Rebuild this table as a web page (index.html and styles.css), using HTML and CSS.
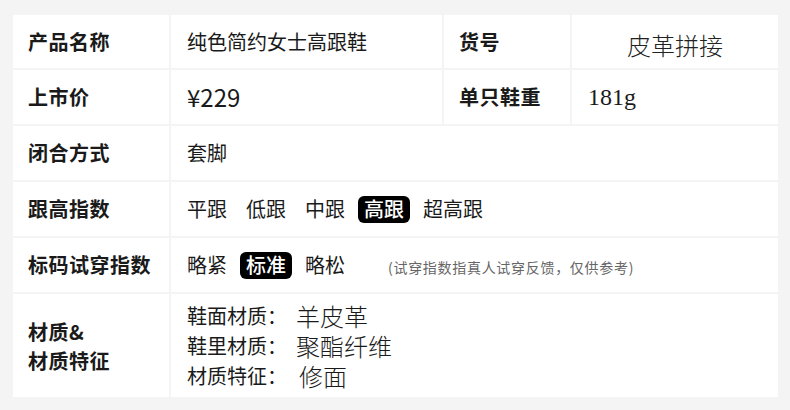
FILE: index.html
```html
<!DOCTYPE html>
<html lang="zh-CN">
<head>
<meta charset="UTF-8">
<meta name="viewport" content="width=device-width, initial-scale=1.0">
<title>产品参数</title>
<link rel="stylesheet" href="styles.css">
</head>
<body>

<div class="spec">
    <div class="cell label">产品名称</div>
    <div class="cell">纯色简约女士高跟鞋</div>
    <div class="cell label">货号</div>
    <div class="cell big light center">皮革拼接</div>

    <div class="cell label">上市价</div>
    <div class="cell big">¥229</div>
    <div class="cell label">单只鞋重</div>
    <div class="cell big serif">181g</div>

    <div class="cell label">闭合方式</div>
    <div class="cell wide">套脚</div>

    <div class="cell label">跟高指数</div>
    <div class="cell wide">
        <div class="options">
            <span class="opt">平跟</span>
            <span class="opt">低跟</span>
            <span class="opt">中跟</span>
            <span class="opt on">高跟</span>
            <span class="opt">超高跟</span>
        </div>
    </div>

    <div class="cell label">标码试穿指数</div>
    <div class="cell wide">
        <div class="options">
            <span class="opt">略紧</span>
            <span class="opt on">标准</span>
            <span class="opt">略松</span>
            <span class="note">(试穿指数指真人试穿反馈，仅供参考)</span>
        </div>
    </div>

    <div class="cell label lines">材质&amp;<br>材质特征</div>
    <div class="cell wide">
        <div class="material">
            <div class="mrow">鞋面材质：<span class="mval">羊皮革</span></div>
            <div class="mrow">鞋里材质：<span class="mval">聚酯纤维</span></div>
            <div class="mrow">材质特征：<span class="mval extra">修面</span></div>
        </div>
    </div>
</div>

</body>
</html>
```

FILE: styles.css
```css
body {
    margin: 0;
    padding: 15px 0 0 13px;
    background-color: #f4f4f4;
    font-family: "Noto Sans CJK SC", "Noto Sans", sans-serif;
    color: #1a1a1a;
}
.spec {
    display: grid;
    grid-template-columns: 156px 271px 126px 206px;
    grid-template-rows: 53px 54px 54px 54px 54px 103px;
    gap: 2px;
}
.cell {
    display: flex;
    align-items: center;
    padding-left: 16px;
    background-color: #fff;
    font-size: 20px;
    line-height: 1;
}
.label {
    padding-left: 15px;
    font-weight: bold;
    letter-spacing: 0.5px;
}
.lines {
    line-height: 29px;
}
.wide {
    grid-column: span 3;
}
.big {
    font-size: 24px;
}
.light {
    font-weight: 300;
    color: #222;
}
.center {
    justify-content: center;
    padding-left: 0;
    padding-top: 6px;
}
.serif {
    font-family: "Liberation Serif", serif;
}
.options {
    display: flex;
    align-items: baseline;
    gap: 7px;
    margin-left: -6px;
}
.opt {
    padding: 3px 6px 4px;
    border-radius: 6px;
}
.opt.on {
    background-color: #000;
    color: #fff;
    font-weight: 500;
}
.note {
    margin-left: 30px;
    font-size: 14px;
    letter-spacing: 0.7px;
    color: #666;
}
.material {
    display: flex;
    flex-direction: column;
    gap: 0;
}
.mrow {
    display: flex;
    align-items: center;
    height: 30px;
}
.mval {
    margin-left: 9px;
    font-size: 24px;
    font-weight: 300;
}
.mval.extra {
    margin-left: 12px;
}
```
